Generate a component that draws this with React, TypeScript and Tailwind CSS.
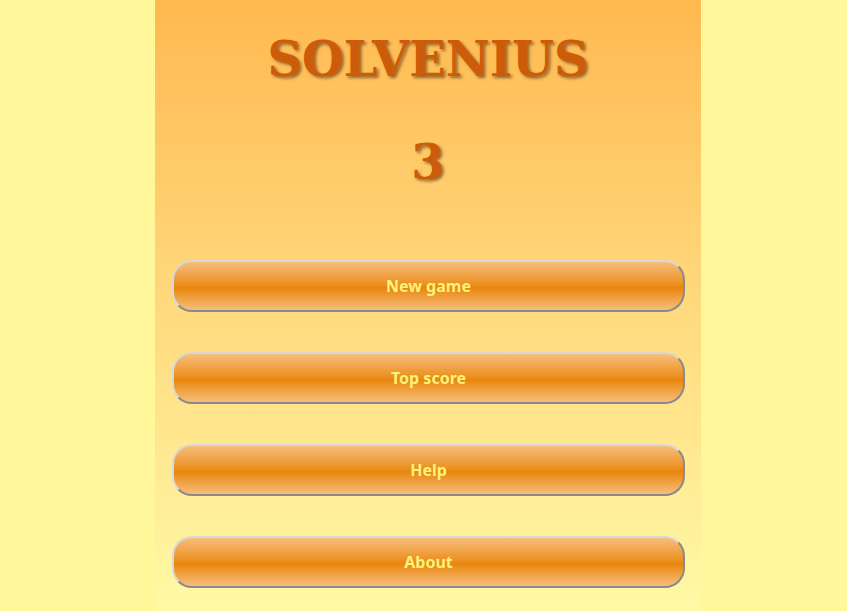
import React from "react";

const items = ["New game", "Top score", "Help", "About"];

export default function App() {
  return (
    <div className="min-h-screen w-full bg-[#fff799] flex justify-center pl-[9px]">
      <div className="w-[546px] min-h-[611px] bg-gradient-to-b from-[#ffb94f] to-[#fff9a6] flex flex-col items-stretch">
        <h1
          className="text-center text-[48px] leading-[60px] font-bold text-[#cc5c0a] mt-[29px] [text-shadow:2px_2px_3px_rgba(60,30,0,0.55)]"
          style={{ fontFamily: '"DejaVu Serif", serif' }}
        >
          SOLVENIUS
        </h1>
        <div
          className="text-center text-[48px] leading-[60px] font-bold text-[#cc5c0a] mt-[43px] [text-shadow:2px_2px_3px_rgba(60,30,0,0.55)]"
          style={{ fontFamily: '"DejaVu Serif", serif' }}
        >
          3
        </div>
        <div className="flex flex-col gap-[40px] mt-[68px] pl-[17px] pr-[16px]">
          {items.map((t) => (
            <button
              key={t}
              className="h-[52px] w-full rounded-[20px] border-2 border-t-[#d8d8d8] border-l-[#d8d8d8] border-b-[#8a8a8a] border-r-[#8a8a8a] bg-[linear-gradient(to_bottom,#f6be7c_0%,#eb8d1a_50%,#e8850a_52%,#f6be7c_100%)] text-[#fff27a] text-[16px] font-bold"
              style={{ fontFamily: '"Noto Sans", sans-serif' }}
            >
              {t}
            </button>
          ))}
        </div>
      </div>
    </div>
  );
}
